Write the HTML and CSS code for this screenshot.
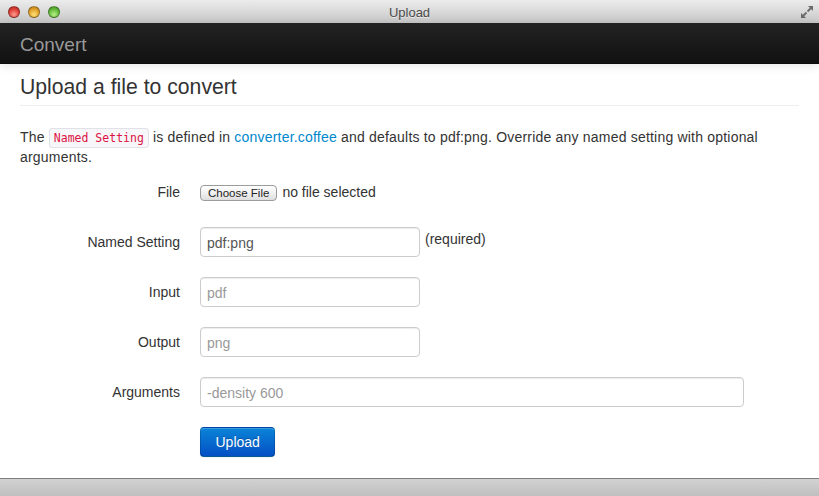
FILE: index.html
```html
<!DOCTYPE html>
<html lang="en">
<head>
<meta charset="utf-8">
<title>Upload</title>
<link rel="stylesheet" href="styles.css">
</head>
<body>
<div class="window">
  <header class="titlebar">
    <div class="lights">
      <span class="light red"></span>
      <span class="light yellow"></span>
      <span class="light green"></span>
    </div>
    <div class="title">Upload</div>
    <div class="resize">
      <svg width="14" height="14" viewBox="0 0 14 14">
        <polygon points="8,1 13,1 13,6" fill="#6a6a6a"/>
        <line x1="11" y1="3" x2="7.5" y2="6.5" stroke="#6a6a6a" stroke-width="1.8"/>
        <polygon points="1,8 1,13 6,13" fill="#6a6a6a"/>
        <line x1="3" y1="11" x2="6.5" y2="7.5" stroke="#6a6a6a" stroke-width="1.8"/>
      </svg>
    </div>
  </header>
  <nav class="navbar"><a class="brand" href="#">Convert</a></nav>
  <main class="content">
    <h1 class="page-title">Upload a file to convert</h1>
    <p class="intro">The <code class="code">Named Setting</code> is defined in <a class="link" href="#">converter.coffee</a> and defaults to pdf:png. Override any named setting with optional arguments.</p>
    <form class="form">
      <div class="group">
        <label class="label">File</label>
        <div class="controls file-controls"><span class="file-btn">Choose File</span><span class="file-name">no file selected</span></div>
      </div>
      <div class="group">
        <label class="label">Named Setting</label>
        <div class="controls"><input class="field" type="text" value="pdf:png"><span class="help">(required)</span></div>
      </div>
      <div class="group">
        <label class="label">Input</label>
        <div class="controls"><input class="field" type="text" placeholder="pdf"></div>
      </div>
      <div class="group">
        <label class="label">Output</label>
        <div class="controls"><input class="field" type="text" placeholder="png"></div>
      </div>
      <div class="group">
        <label class="label">Arguments</label>
        <div class="controls"><input class="field field-wide" type="text" placeholder="-density 600"></div>
      </div>
      <div class="actions">
        <button class="btn-primary" type="button">Upload</button>
      </div>
    </form>
  </main>
  <footer class="statusbar"></footer>
</div>
</body>
</html>
```
FILE: styles.css
```css
* { box-sizing: border-box; }
html, body {
  margin: 0;
  padding: 0;
  background: #fff;
}
body {
  font-family: "Liberation Sans", Arial, Helvetica, sans-serif;
  font-size: 14px;
  line-height: 20px;
  color: #333;
  overflow: hidden;
}
.window {
  display: flex;
  flex-direction: column;
  height: 496px;
  width: 819px;
}

/* title bar */
.titlebar {
  height: 23px;
  flex: none;
  display: grid;
  grid-template-columns: 1fr auto 1fr;
  align-items: center;
  background: linear-gradient(#ececec, #d6d6d6 60%, #c9c9c9);
}
.lights {
  display: flex;
  gap: 8px;
  padding-left: 8px;
}
.light {
  width: 12px;
  height: 12px;
  border-radius: 50%;
  border: 1px solid rgba(0,0,0,0.35);
}
.red { background: radial-gradient(circle at 50% 75%, #ff9d92 0%, #e0443b 55%, #b3251e 100%); }
.yellow { background: radial-gradient(circle at 50% 75%, #ffe27a 0%, #e2a42c 55%, #b87a14 100%); }
.green { background: radial-gradient(circle at 50% 75%, #b9f18a 0%, #66bd3d 55%, #3e8e22 100%); }
.title {
  font-size: 13px;
  line-height: 23px;
  padding-top: 1px;
  color: #4a4a4a;
  text-shadow: 0 1px 0 rgba(255,255,255,0.6);
}
.resize {
  justify-self: end;
  padding-right: 5px;
  height: 14px;
}
.resize svg { display: block; }

/* navbar */
.navbar {
  height: 41px;
  flex: none;
  background: linear-gradient(#232323, #111);
  border-bottom: 1px solid #0c0c0c;
  box-shadow: 0 1px 10px rgba(0,0,0,0.12);
  padding: 12px 20px 0;
}
.brand {
  display: block;
  font-size: 19px;
  line-height: 20px;
  color: #999;
  text-decoration: none;
}

/* content */
.content {
  flex: 1;
  padding: 0 20px;
}
.page-title {
  margin: 8px 0 0;
  font-size: 21.2px;
  line-height: 30px;
  font-weight: normal;
  color: #333;
  padding-bottom: 3px;
  border-bottom: 1px solid #eee;
}
.intro {
  margin: 21px 0 10px;
  letter-spacing: 0.2px;
}
.code {
  font-family: "DejaVu Sans Mono", "Liberation Mono", Menlo, monospace;
  font-size: 11.5px;
  line-height: 1;
  letter-spacing: 0;
  color: #d14;
  background: #f7f7f9;
  border: 1px solid #e1e1e8;
  border-radius: 3px;
  padding: 2px 4px;
}
.link {
  color: #0088cc;
  text-decoration: none;
}

/* form */
.group {
  display: flex;
  margin-bottom: 20px;
  min-height: 30px;
}
.label {
  width: 160px;
  flex: none;
  text-align: right;
  padding-top: 5px;
  line-height: 20px;
  color: #333;
}
.controls {
  margin-left: 20px;
  display: flex;
  align-items: flex-start;
}
.file-controls {
  display: block;
  padding-top: 5px;
  line-height: 20px;
}
.file-btn {
  display: inline-block;
  font-size: 11.5px;
  line-height: 14px;
  padding: 0 7px;
  color: #222;
  border: 1px solid #9c9c9c;
  border-radius: 4px;
  background: linear-gradient(#ffffff, #f1f1f1 50%, #dedede);
  margin-right: 5px;
}
.field {
  width: 220px;
  height: 30px;
  padding: 5px 6px 3px;
  font-family: inherit;
  font-size: 14px;
  line-height: 20px;
  color: #555;
  border: 1px solid #ccc;
  border-radius: 4px;
  box-shadow: inset 0 1px 1px rgba(0,0,0,0.075);
  background: #fff;
  outline: none;
}
.field::placeholder { color: #999; }
.field-wide { width: 544px; }
.help {
  padding-left: 5px;
  padding-top: 2px;
  line-height: 20px;
  color: #333;
}
.actions {
  padding-left: 180px;
}
.btn-primary {
  display: inline-block;
  height: 30px;
  padding: 4px 14.5px;
  font-family: inherit;
  font-size: 14px;
  line-height: 20px;
  color: #fff;
  text-shadow: 0 -1px 0 rgba(0,0,0,0.25);
  background: linear-gradient(#0a84d8, #0450c4);
  border: 1px solid rgba(0,0,0,0.15);
  border-bottom-color: rgba(0,0,0,0.3);
  border-radius: 4px;
  box-shadow: inset 0 1px 0 rgba(255,255,255,0.2), 0 1px 2px rgba(0,0,0,0.05);
}

/* bottom bar */
.statusbar {
  height: 18px;
  flex: none;
  border-top: 1px solid #7f7f7f;
  background: linear-gradient(#d2d2d2, #bfbfbf);
}
```
